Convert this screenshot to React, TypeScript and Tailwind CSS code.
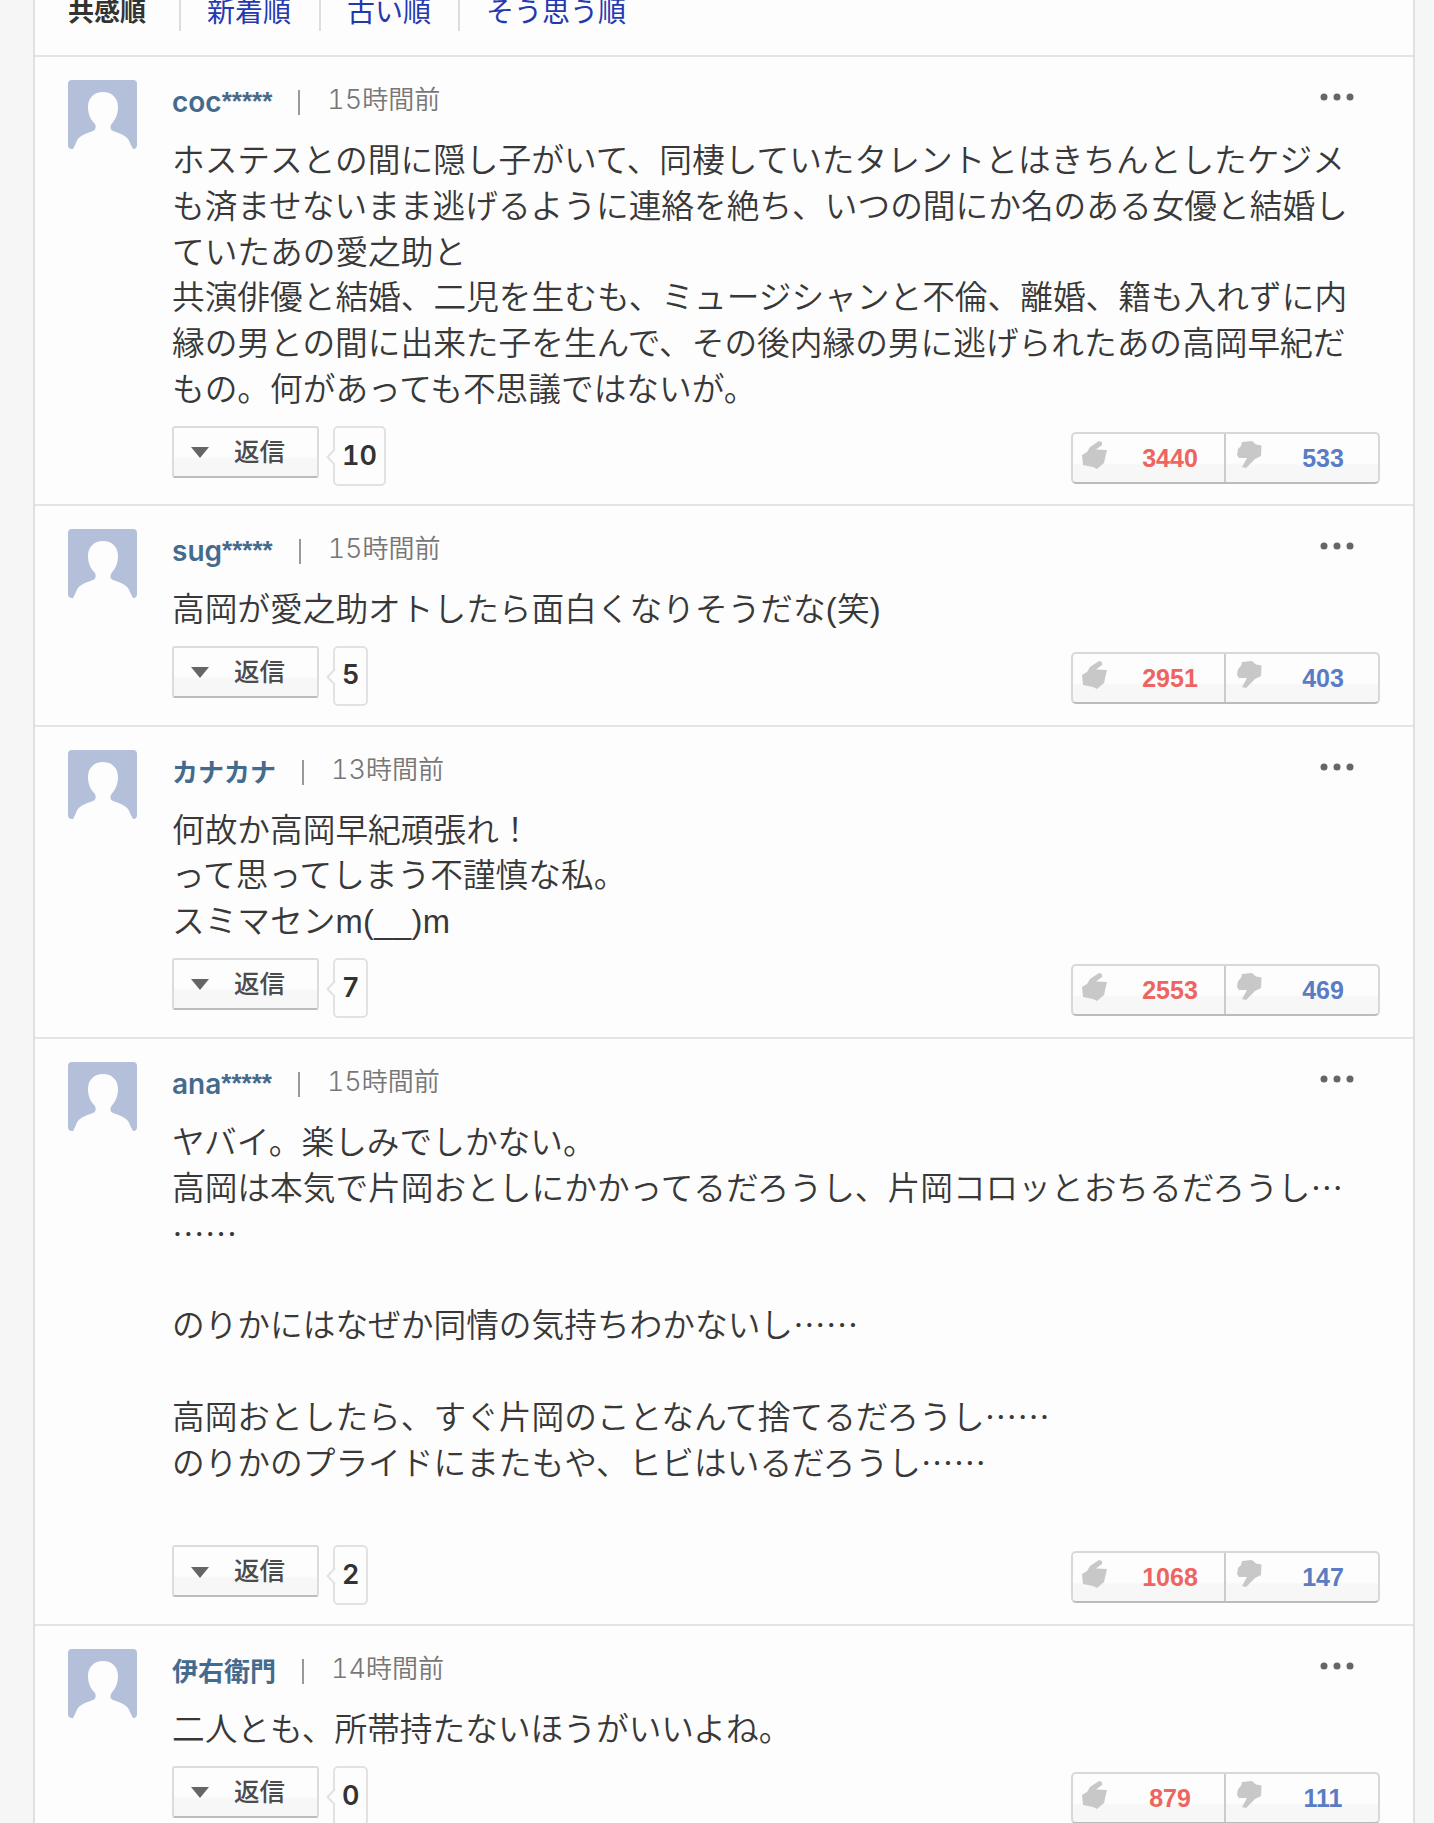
import { Fragment } from 'react';

type Comment = {
  user: string;
  time: string;
  lines: string[];
  replies: number;
  good: number;
  bad: number;
};

const comments: Comment[] = [
  {
    user: 'coc*****',
    time: '15時間前',
    lines: [
      'ホステスとの間に隠し子がいて、同棲していたタレントとはきちんとしたケジメ',
      'も済ませないまま逃げるように連絡を絶ち、いつの間にか名のある女優と結婚し',
      'ていたあの愛之助と',
      '共演俳優と結婚、二児を生むも、ミュージシャンと不倫、離婚、籍も入れずに内',
      '縁の男との間に出来た子を生んで、その後内縁の男に逃げられたあの高岡早紀だ',
      'もの。何があっても不思議ではないが。',
    ],
    replies: 10,
    good: 3440,
    bad: 533,
  },
  {
    user: 'sug*****',
    time: '15時間前',
    lines: ['高岡が愛之助オトしたら面白くなりそうだな(笑)'],
    replies: 5,
    good: 2951,
    bad: 403,
  },
  {
    user: 'カナカナ',
    time: '13時間前',
    lines: ['何故か高岡早紀頑張れ！', 'って思ってしまう不謹慎な私。', 'スミマセンm(__)m'],
    replies: 7,
    good: 2553,
    bad: 469,
  },
  {
    user: 'ana*****',
    time: '15時間前',
    lines: [
      'ヤバイ。楽しみでしかない。',
      '高岡は本気で片岡おとしにかかってるだろうし、片岡コロッとおちるだろうし…',
      '……',
      '',
      'のりかにはなぜか同情の気持ちわかないし……',
      '',
      '高岡おとしたら、すぐ片岡のことなんて捨てるだろうし……',
      'のりかのプライドにまたもや、ヒビはいるだろうし……',
      '',
    ],
    replies: 2,
    good: 1068,
    bad: 147,
  },
  {
    user: '伊右衛門',
    time: '14時間前',
    lines: ['二人とも、所帯持たないほうがいいよね。'],
    replies: 0,
    good: 879,
    bad: 111,
  },
];

// Sets a different face on the Latin runs of a mixed Japanese text
const Mixed = ({ text, latin }: { text: string; latin: string }) => (
  <>
    {text.split(/([!-)+-~]+|\*+)/).map((part, i) => {
      if (/^\*/.test(part)) {
        return (
          <span key={i} className="align-[2px] font-['Liberation_Sans',sans-serif] leading-none">
            {part}
          </span>
        );
      }
      if (/^[!-~]/.test(part)) {
        return (
          <span key={i} className={latin}>
            {part}
          </span>
        );
      }
      return <Fragment key={i}>{part}</Fragment>;
    })}
  </>
);

const Avatar = () => (
  <svg viewBox="0 0 69 69" className="h-[69px] w-[69px] shrink-0">
    <rect width="69" height="69" rx="4" fill="#b4bfd9" />
    <path
      d="M35 12c-9 0-15 6-15 15 0 8 3 13 7 17 1 2 1 5-1 6.500C20 53 10 55 8 63L5 69h60l-3-6C60 55 50 53 44 50.500c-2-1.500-2-4.500-.5-6.500 3.500-4 6.500-9 6.500-17 0-9-6-15-15-15z"
      fill="#fdfdfd"
    />
  </svg>
);

const Thumb = ({ down }: { down?: boolean }) => (
  <svg viewBox="0 0 26 28" className="h-7 w-[26px]" fill="#c8c8c8">
    {down ? (
      <path d="M5 1L15 0L19 3.500L24.500 4.500L24 15L18 18L9 27L5 26L10 17L2 17L0 14L1 8L4 5z" />
    ) : (
      <path d="M17 0L20 1L20 4L14 8.500L25 9L24 13L22 22L15 28L11 26L1 24L0 14L5 11L8 6z" />
    )}
  </svg>
);

const VoteButtons = ({ good, bad }: { good: number; bad: number }) => (
  <div className="flex h-[52px] w-[309px] rounded-[5px] border-2 border-[#d8d8d8] border-b-[#bcbcbc] bg-linear-to-b from-[#fdfdfd] from-60% to-[#f7f7f7] to-65% font-['Liberation_Sans',sans-serif] text-[25px] leading-[48px] font-bold">
    <div className="flex w-[153px] border-r-2 border-[#cccccc] pt-[7px] pl-[9px]">
      <Thumb />
      <span className="-mt-[7px] ml-[12px] w-[100px] text-center text-[#ee6460]">{good}</span>
    </div>
    <div className="flex flex-1 pt-[7px] pl-[11px]">
      <Thumb down />
      <span className="-mt-[7px] ml-[10px] w-[100px] text-center text-[#5a7cc4]">{bad}</span>
    </div>
  </div>
);

const ReplyButton = ({ count }: { count: number }) => (
  <div className="flex items-start">
    <button
      type="button"
      className="flex h-[52px] w-[147px] items-center rounded-[3px] border-2 border-[#dcdcdc] border-b-[#bcbcbc] bg-linear-to-b from-[#fdfdfd] from-60% to-[#f7f7f7] to-65% pl-[17px] text-[25.500px] font-medium text-[#4c4c4c]"
    >
      <svg viewBox="0 0 18 11" className="mt-0.5 h-[11px] w-[18px]" fill="#666">
        <path d="M0 0h18L9 11z" />
      </svg>
      <span className="-mt-1 ml-[25px] leading-none">返信</span>
    </button>
    <div className="relative ml-[14px] flex h-[60px] items-center rounded-[5px] border-2 border-[#e2e2e2] px-[7px] font-['Inter',sans-serif] text-[27px] font-semibold text-[#333] tabular-nums">
      <svg viewBox="0 0 10 16" className="absolute top-[21px] -left-[9px] h-4 w-[10px]">
        <path d="M9 0L1.500 8L9 16" fill="#fdfdfd" stroke="#e2e2e2" strokeWidth="2" />
      </svg>
      {count}
    </div>
  </div>
);

const CommentItem = ({ comment }: { comment: Comment }) => (
  <li className="group flex border-t-2 border-[#e4e4e4] pt-[23px] pr-[33px] pl-[33px]">
    <Avatar />
    <div className="ml-[35px] flex-1">
      <div className="flex h-[55px] items-start text-[26px] leading-10">
        <span className="pt-px font-bold text-[#446b8e]">
          <Mixed text={comment.user} latin="font-['Inter',sans-serif] text-[28px] font-semibold" />
        </span>
        <span className="mt-[10px] ml-[26px] h-[25px] w-0.5 bg-[#999]" />
        <span className="-mt-0.5 ml-[27px] font-[350] text-[#777]">
          <Mixed
            text={comment.time}
            latin="font-['Inter',sans-serif] text-[27px] font-light tabular-nums"
          />
        </span>
        <svg viewBox="0 0 34 8" className="mt-[13px] mr-[26px] ml-auto h-2 w-[34px]" fill="#666">
          <circle cx="4" cy="4" r="3.500" />
          <circle cx="17" cy="4" r="3.500" />
          <circle cx="30" cy="4" r="3.500" />
        </svg>
      </div>
      <div className="text-[32.700px] leading-[45.800px] font-[350] whitespace-nowrap text-[#383838]">
        {comment.lines.map((line, i) => (
          <p key={i} className="h-[45.800px]">
            <Mixed text={line} latin="font-['Liberation_Sans',sans-serif] tracking-[0.4px]" />
          </p>
        ))}
      </div>
      <div className="flex h-[95px] items-start justify-between pt-[16px] group-first:h-[94px]">
        <ReplyButton count={comment.replies} />
        <div className="pt-[6px]">
          <VoteButtons good={comment.good} bad={comment.bad} />
        </div>
      </div>
    </div>
  </li>
);

const App = () => {
  return (
    <div className="h-[1823px] overflow-hidden bg-[#f6f6f6] font-['Noto_Sans_CJK_JP',sans-serif]">
      <main className="ml-[33px] h-full w-[1382px] border-x-2 border-[#e0e0e0] bg-[#fdfdfd]">
        <nav className="flex h-[55px] text-[28px] leading-[20px] text-[#2438b0]">
          <span className="w-[144px] pl-[33px] text-[26px] font-bold text-[#333]">共感順</span>
          <a className="h-[31px] w-[140px] border-l-2 border-[#ddd] pl-[26px]">新着順</a>
          <a className="h-[31px] w-[139px] border-l-2 border-[#ddd] pl-[26px]">古い順</a>
          <a className="h-[31px] border-l-2 border-[#ddd] pl-[26px]">そう思う順</a>
        </nav>
        <ul>
          {comments.map((comment) => (
            <CommentItem key={comment.user} comment={comment} />
          ))}
        </ul>
      </main>
    </div>
  );
};

export default App;
